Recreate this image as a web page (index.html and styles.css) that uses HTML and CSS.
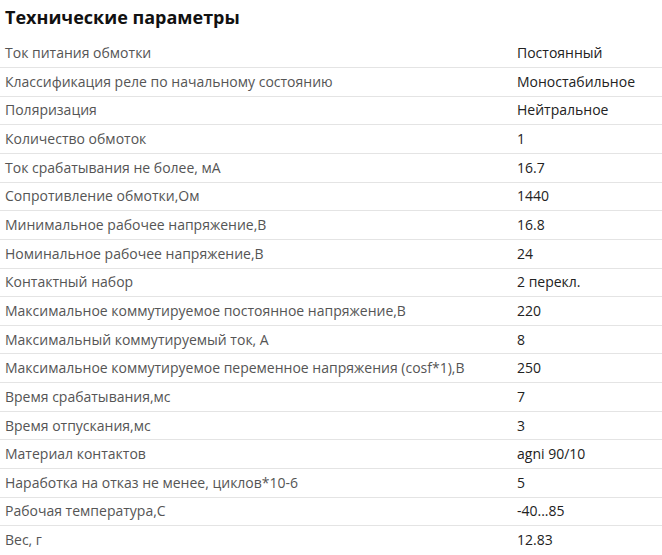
FILE: index.html
```html
<!DOCTYPE html>
<html lang="ru">
<head>
<meta charset="utf-8">
<link rel="stylesheet" href="styles.css">
</head>
<body>
<div class="specs">
  <h2 class="specs-title">Технические параметры</h2>
  <div class="specs-table">
    <div class="row"><div class="label">Ток питания обмотки</div><div class="value">Постоянный</div></div>
    <div class="row"><div class="label">Классификация реле по начальному состоянию</div><div class="value">Моностабильное</div></div>
    <div class="row"><div class="label">Поляризация</div><div class="value">Нейтральное</div></div>
    <div class="row"><div class="label">Количество обмоток</div><div class="value">1</div></div>
    <div class="row"><div class="label">Ток срабатывания не более, мА</div><div class="value">16.7</div></div>
    <div class="row"><div class="label">Сопротивление обмотки,Ом</div><div class="value">1440</div></div>
    <div class="row"><div class="label">Минимальное рабочее напряжение,В</div><div class="value">16.8</div></div>
    <div class="row"><div class="label">Номинальное рабочее напряжение,В</div><div class="value">24</div></div>
    <div class="row"><div class="label">Контактный набор</div><div class="value">2 перекл.</div></div>
    <div class="row"><div class="label">Максимальное коммутируемое постоянное напряжение,В</div><div class="value">220</div></div>
    <div class="row"><div class="label">Максимальный коммутируемый ток, А</div><div class="value">8</div></div>
    <div class="row"><div class="label">Максимальное коммутируемое переменное напряжения (cosf*1),В</div><div class="value">250</div></div>
    <div class="row"><div class="label">Время срабатывания,мс</div><div class="value">7</div></div>
    <div class="row"><div class="label">Время отпускания,мс</div><div class="value">3</div></div>
    <div class="row"><div class="label">Материал контактов</div><div class="value">agni 90/10</div></div>
    <div class="row"><div class="label">Наработка на отказ не менее, циклов*10-6</div><div class="value">5</div></div>
    <div class="row"><div class="label">Рабочая температура,С</div><div class="value">-40...85</div></div>
    <div class="row"><div class="label">Вес, г</div><div class="value">12.83</div></div>
  </div>
</div>
</body>
</html>
```

FILE: styles.css
```css
html, body {
  margin: 0;
  padding: 0;
  background: #ffffff;
}
body {
  font-family: "Open Sans", "DejaVu Sans", sans-serif;
}
.specs {
  width: 662px;
}
.specs-title {
  margin: 0;
  padding: 4px 5px 0 5px;
  height: 38.4px;
  box-sizing: border-box;
  font-size: 18px;
  line-height: 26px;
  font-weight: 700;
  color: #111111;
}
.specs-table {
  display: flex;
  flex-direction: column;
}
.row {
  display: grid;
  grid-template-columns: 512px 1fr;
  height: 28.65px;
  box-sizing: border-box;
  border-top: 1px solid #e4e4e4;
  align-items: center;
  font-size: 14px;
  line-height: 20px;
}
.row:first-child {
  border-top: none;
}
.label {
  padding-left: 5px;
  color: #555555;
  white-space: nowrap;
}
.value {
  padding-left: 5px;
  color: #222222;
  white-space: nowrap;
}
```
